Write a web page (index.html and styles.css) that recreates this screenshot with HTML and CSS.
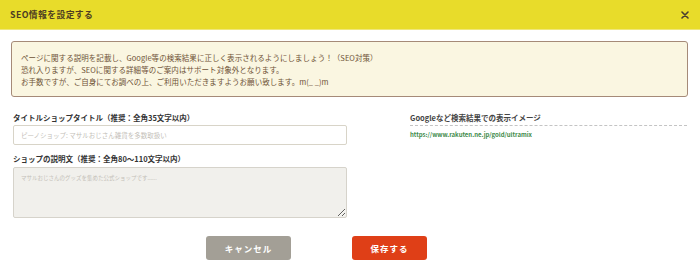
FILE: index.html
```html
<!DOCTYPE html>
<html lang="ja">
<head>
<meta charset="utf-8">
<link rel="stylesheet" href="styles.css">
</head>
<body>
<div class="modal">
  <header class="modal-header">
    <h1 class="modal-title">SEO情報を設定する</h1>
    <span class="close" aria-label="閉じる">
      <svg width="8" height="8" viewBox="0 0 8 8"><path d="M1 1L7 7M7 1L1 7" stroke="#4a4030" stroke-width="1.6" stroke-linecap="round"/></svg>
    </span>
  </header>
  <div class="modal-body">
    <div class="notice">
      <p>ページに関する説明を記載し、Google等の検索結果に正しく表示されるようにしましょう！（SEO対策）</p>
      <p>恐れ入りますが、SEOに関する詳細等のご案内はサポート対象外となります。</p>
      <p>お手数ですが、ご自身にてお調べの上、ご利用いただきますようお願い致します。m(_ _)m</p>
    </div>
    <div class="form-grid">
      <div class="col-left">
        <label class="label">タイトルショップタイトル（推奨：全角35文字以内）</label>
        <input class="input" type="text" placeholder="ピーノショップ: マサルおじさん雑貨を多数取扱い">
        <label class="label label-2">ショップの説明文（推奨：全角80〜110文字以内）</label>
        <textarea class="textarea" placeholder="マサルおじさんのグッズを集めた公式ショップです......"></textarea>
      </div>
      <div class="col-right">
        <div class="preview-title">Googleなど検索結果での表示イメージ</div>
        <div class="preview-url">https://www.rakuten.ne.jp/gold/ultramix</div>
      </div>
    </div>
    <div class="actions">
      <button class="btn btn-cancel">キャンセル</button>
      <button class="btn btn-save">保存する</button>
    </div>
  </div>
</div>
</body>
</html>
```
FILE: styles.css
```css
* { box-sizing: border-box; }
html, body { margin: 0; padding: 0; background: #fff; }
body {
  font-family: "Noto Sans CJK JP", "Noto Sans", sans-serif;
  width: 700px;
  height: 273px;
  overflow: hidden;
}
.modal-header {
  height: 30px;
  background: #e8dc2a;
  border-bottom: 1px solid #efe77a;
  display: flex;
  align-items: center;
  justify-content: space-between;
  padding: 0 11px 0 10px;
}
.modal-title {
  margin: 0;
  font-size: 8.8px;
  font-weight: 700;
  color: #4e3d22;
  letter-spacing: 0.4px;
}
.close { display: flex; width: 8px; height: 8px; }
.modal-body { padding: 11px 12px 0 11px; }
.notice {
  background: #faf6e1;
  border: 1.5px solid #a58a78;
  border-radius: 3px;
  height: 56px;
  padding: 10px 9px;
  color: #6e5236;
  font-size: 7.5px;
  line-height: 12px;
  letter-spacing: 0.05px;
}
.notice p { margin: 0; }
.form-grid {
  display: flex;
  gap: 63px;
  margin-top: 15px;
  padding-left: 2px;
}
.col-left { width: 334px; display: flex; flex-direction: column; }
.col-right { width: 277px; }
.label {
  font-size: 7.5px;
  font-weight: 700;
  color: #333;
  line-height: 12px;
  height: 12px;
}
.label-2 { margin-top: 8px; }
.input {
  margin-top: 1px;
  height: 20px;
  border: 1px solid #d8d4c8;
  border-radius: 2px;
  padding: 0 7px;
  font: inherit;
  font-size: 6.5px;
  background: #fff;
}
.input::placeholder, .textarea::placeholder { color: #c4c0b8; }
.textarea {
  margin-top: 2px;
  height: 51px;
  border: 1.5px solid #d6d3cb;
  border-radius: 2px;
  background: #f1f0ec;
  padding: 6px 7px;
  font: inherit;
  font-size: 5.5px;
  resize: vertical;
}
.preview-title {
  font-size: 7.5px;
  font-weight: 700;
  color: #444;
  line-height: 12px;
  padding-bottom: 1px;
  border-bottom: 1px dashed #c4c4c4;
}
.preview-url {
  margin-top: 4px;
  font-size: 6px;
  font-weight: 700;
  color: #3d8a4a;
  line-height: 10px;
}
.actions {
  display: flex;
  gap: 61px;
  margin-top: 18px;
  padding-left: 195px;
}
.btn {
  height: 24px;
  border: none;
  border-radius: 3px;
  color: #fff;
  font-family: inherit;
  font-size: 8.5px;
  font-weight: 700;
  letter-spacing: 1px;
}
.btn-cancel { width: 85px; background: #a39f96; }
.btn-save { width: 75px; background: #df3f17; }
```
